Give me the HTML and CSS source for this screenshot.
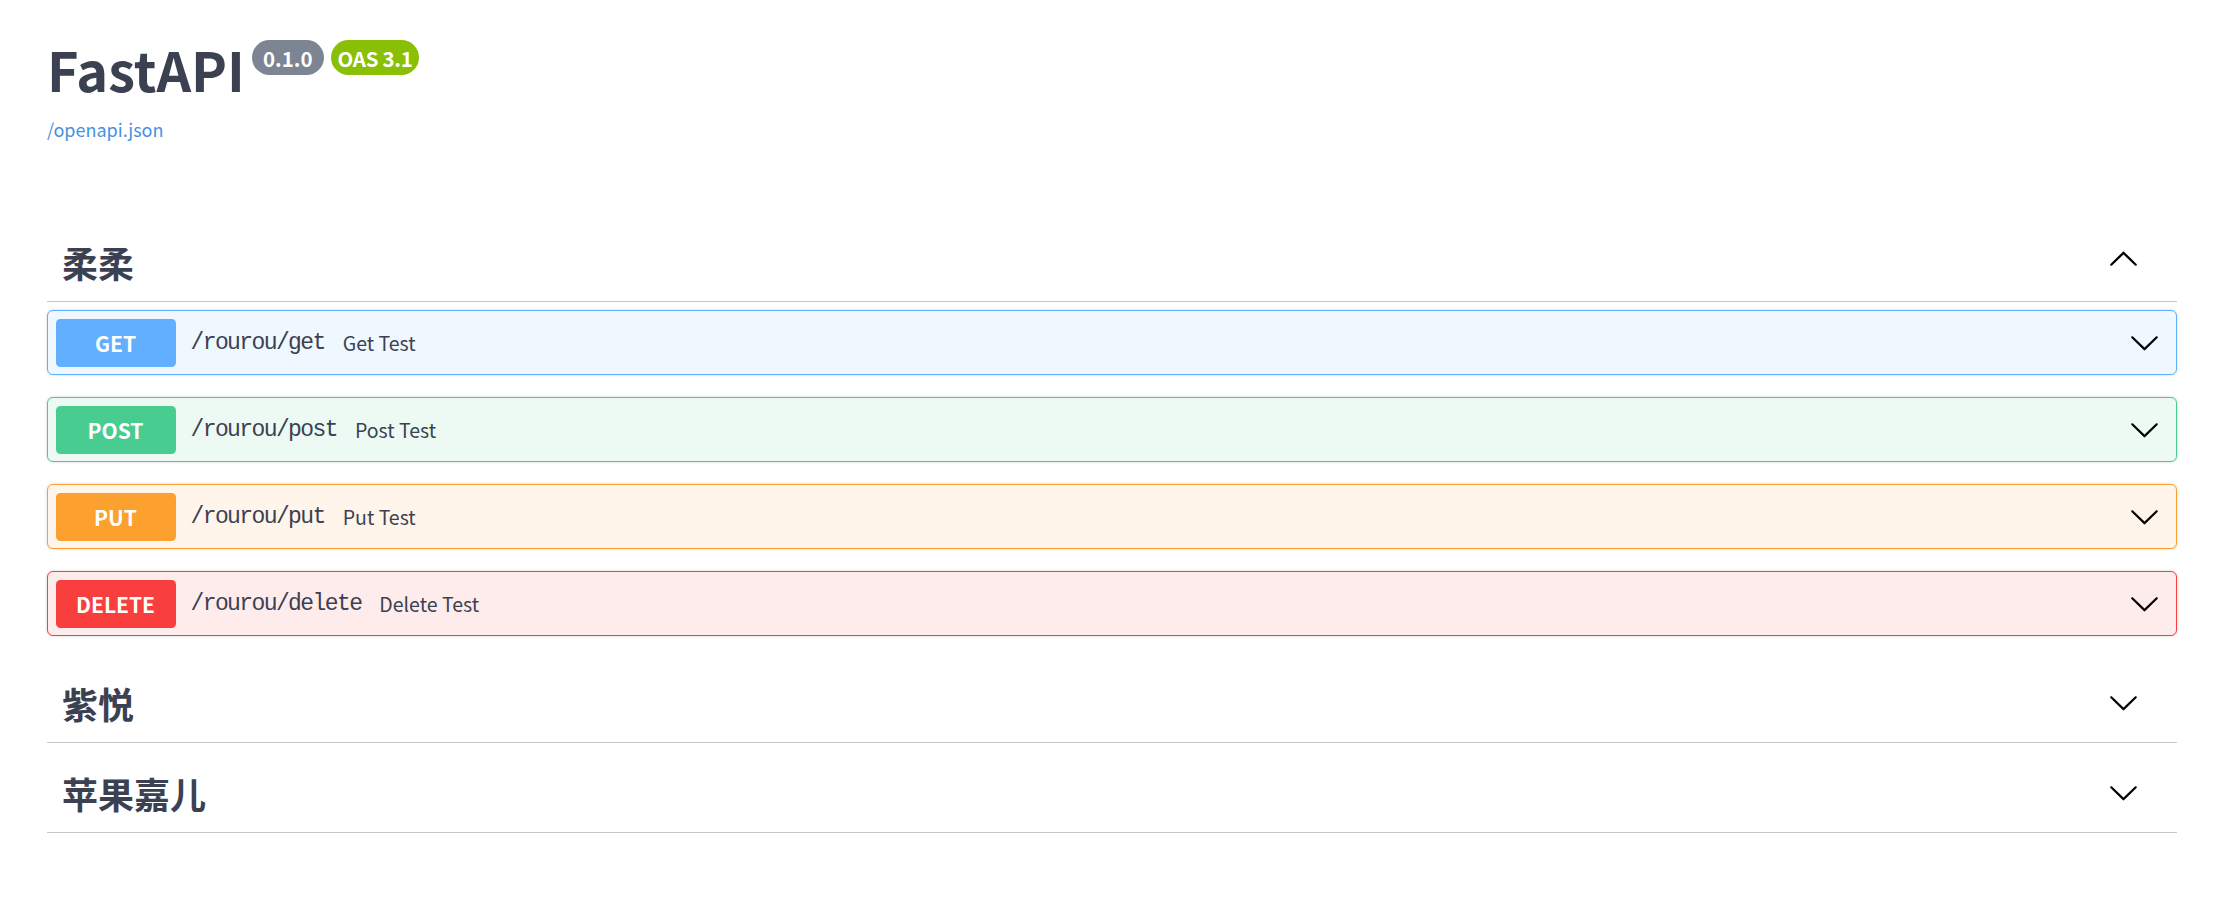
FILE: index.html
```html
<!DOCTYPE html>
<html lang="zh">
<head>
<meta charset="utf-8">
<title>FastAPI - Swagger UI</title>
<link rel="stylesheet" href="styles.css">
</head>
<body>
<div class="wrapper">
  <div class="info">
    <div class="title-row">
      <h2 class="title">FastAPI</h2>
      <span class="version">0.1.0</span>
      <span class="oas">OAS 3.1</span>
    </div>
    <a class="spec-link" href="#">/openapi.json</a>
  </div>

  <div class="tag-section">
    <div class="tag-header">
      <h3 class="tag-name">柔柔</h3>
      <svg class="arrow up" viewBox="0 0 20 20"><path d="M17.418 6.109c.272-.268.709-.268.979 0s.271.701 0 .969l-7.908 7.83c-.27.268-.707.268-.979 0l-7.908-7.83c-.27-.268-.27-.701 0-.969.271-.268.709-.268.979 0L10 13.250l7.418-7.141z"/></svg>
    </div>
    <div class="ops">
      <div class="op op-get">
        <span class="method">GET</span>
        <span class="path">/rourou/get</span>
        <span class="desc">Get Test</span>
        <svg class="arrow" viewBox="0 0 20 20"><path d="M17.418 6.109c.272-.268.709-.268.979 0s.271.701 0 .969l-7.908 7.83c-.27.268-.707.268-.979 0l-7.908-7.83c-.27-.268-.27-.701 0-.969.271-.268.709-.268.979 0L10 13.25l7.418-7.141z"/></svg>
      </div>
      <div class="op op-post">
        <span class="method">POST</span>
        <span class="path">/rourou/post</span>
        <span class="desc">Post Test</span>
        <svg class="arrow" viewBox="0 0 20 20"><path d="M17.418 6.109c.272-.268.709-.268.979 0s.271.701 0 .969l-7.908 7.83c-.27.268-.707.268-.979 0l-7.908-7.83c-.27-.268-.27-.701 0-.969.271-.268.709-.268.979 0L10 13.25l7.418-7.141z"/></svg>
      </div>
      <div class="op op-put">
        <span class="method">PUT</span>
        <span class="path">/rourou/put</span>
        <span class="desc">Put Test</span>
        <svg class="arrow" viewBox="0 0 20 20"><path d="M17.418 6.109c.272-.268.709-.268.979 0s.271.701 0 .969l-7.908 7.83c-.27.268-.707.268-.979 0l-7.908-7.83c-.27-.268-.27-.701 0-.969.271-.268.709-.268.979 0L10 13.25l7.418-7.141z"/></svg>
      </div>
      <div class="op op-delete">
        <span class="method">DELETE</span>
        <span class="path">/rourou/delete</span>
        <span class="desc">Delete Test</span>
        <svg class="arrow" viewBox="0 0 20 20"><path d="M17.418 6.109c.272-.268.709-.268.979 0s.271.701 0 .969l-7.908 7.83c-.27.268-.707.268-.979 0l-7.908-7.83c-.27-.268-.27-.701 0-.969.271-.268.709-.268.979 0L10 13.25l7.418-7.141z"/></svg>
      </div>
    </div>
  </div>

  <div class="tag-section">
    <div class="tag-header">
      <h3 class="tag-name">紫悦</h3>
      <svg class="arrow" viewBox="0 0 20 20"><path d="M17.418 6.109c.272-.268.709-.268.979 0s.271.701 0 .969l-7.908 7.83c-.27.268-.707.268-.979 0l-7.908-7.83c-.27-.268-.27-.701 0-.969.271-.268.709-.268.979 0L10 13.25l7.418-7.141z"/></svg>
    </div>
  </div>

  <div class="tag-section">
    <div class="tag-header">
      <h3 class="tag-name">苹果嘉儿</h3>
      <svg class="arrow" viewBox="0 0 20 20"><path d="M17.418 6.109c.272-.268.709-.268.979 0s.271.701 0 .969l-7.908 7.83c-.27.268-.707.268-.979 0l-7.908-7.83c-.27-.268-.27-.701 0-.969.271-.268.709-.268.979 0L10 13.25l7.418-7.141z"/></svg>
    </div>
  </div>
</div>
</body>
</html>
```

FILE: styles.css
```css
* { box-sizing: border-box; }
html, body { margin: 0; padding: 0; background: #fff; }
body {
  font-family: "Noto Sans CJK SC", "Noto Sans", sans-serif;
  color: #3b4151;
}
.wrapper {
  width: 2130px;
  margin-left: 47px;
}
.info {
  height: 212px;
  padding-top: 37px;
}
.title-row {
  display: flex;
  align-items: flex-start;
}
.title {
  margin: 0;
  font-size: 54px;
  line-height: 64px;
  font-weight: 700;
  color: #3b4151;
}
.version, .oas {
  display: inline-flex;
  align-items: center;
  justify-content: center;
  height: 35px;
  margin-top: 3px;
  border-radius: 18px;
  color: #fff;
  font-weight: 700;
  font-size: 20.5px;
}
.version { background: #7d8492; margin-left: 7px; padding: 0 11px; }
.oas { background: #89bf04; margin-left: 7px; padding: 0 7px; letter-spacing: -0.3px; }
.spec-link {
  display: block;
  margin-top: 16px;
  font-size: 18px;
  line-height: 24px;
  color: #4990e2;
  text-decoration: none;
}
.tag-header {
  display: flex;
  align-items: center;
  height: 90px;
  padding: 10px 38px 0 15px;
  border-bottom: 1px solid #c4c6cb;
}
.tag-name {
  flex: 1;
  margin: 0;
  font-size: 36px;
  line-height: 48px;
  font-weight: 700;
  color: #3b4151;
}
.arrow {
  width: 31px;
  height: 31px;
  flex: none;
  fill: #000;
}
.arrow.up { transform: rotate(180deg); margin-top: -4px; }
.ops {
  display: flex;
  flex-direction: column;
  gap: 22px;
  padding: 8px 0 17px;
}
.op {
  display: flex;
  align-items: center;
  height: 65px;
  padding: 0 16px 0 7.5px;
  border: 1px solid;
  border-radius: 6px;
  box-shadow: 0 0 3px rgba(0,0,0,.19);
}
.method {
  width: 120px;
  height: 48px;
  display: flex;
  align-items: center;
  justify-content: center;
  border-radius: 4.5px;
  color: #fff;
  font-weight: 700;
  font-size: 21px;
  flex: none;
}
.path {
  margin-left: 15px;
  font-family: "Liberation Mono", monospace;
  font-size: 23px;
  letter-spacing: -1.6px;
  color: #3b4151;
}
.desc {
  flex: 1;
  margin-left: 18px;
  font-size: 19.5px;
  color: #3b4151;
}
.op-get { background: #eff7ff; border-color: #61affe; }
.op-get .method { background: #61affe; }
.op-post { background: #edfaf4; border-color: #49cc90; }
.op-post .method { background: #49cc90; }
.op-put { background: #fff5ea; border-color: #fca130; }
.op-put .method { background: #fca130; }
.op-delete { background: #feecec; border-color: #f93e3e; }
.op-delete .method { background: #f93e3e; }
```
